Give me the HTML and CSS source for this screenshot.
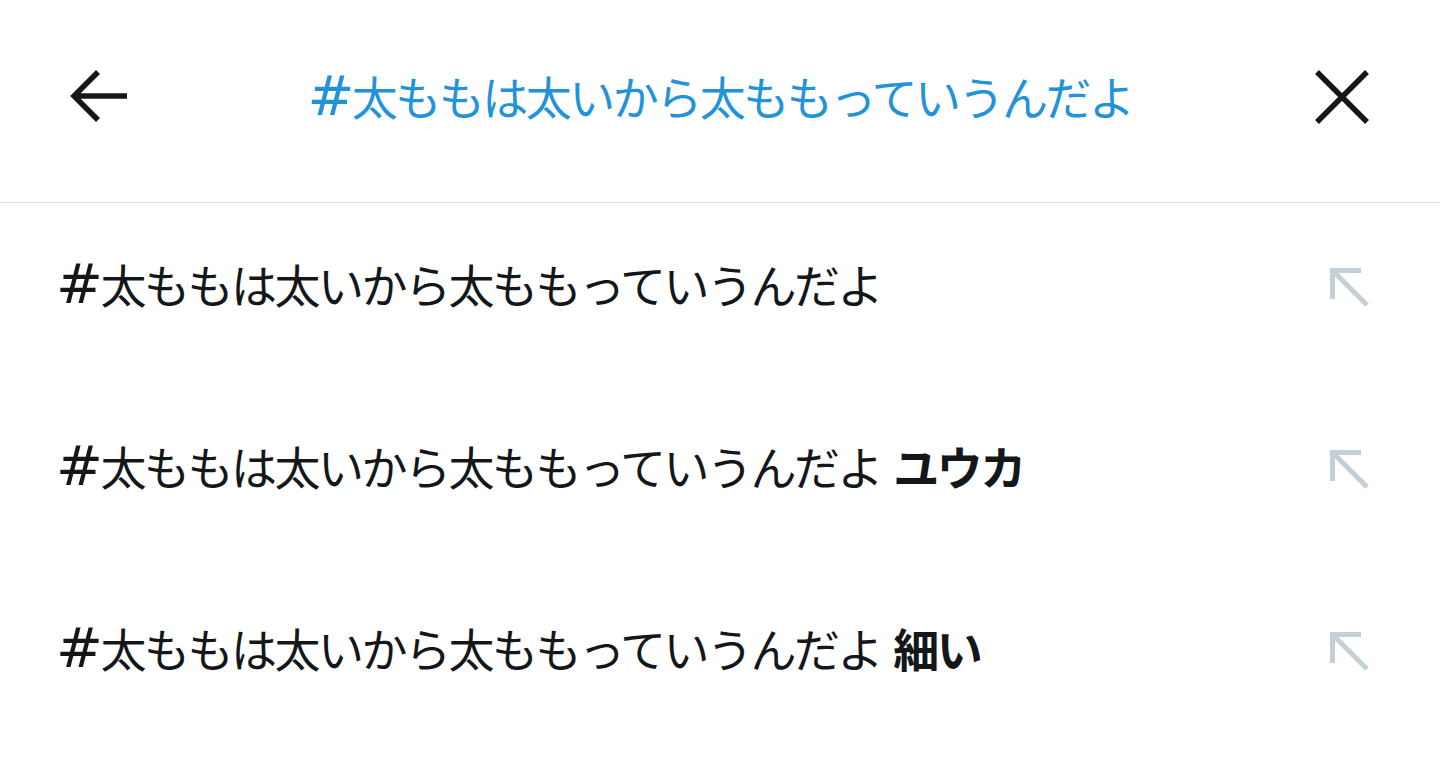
FILE: index.html
```html
<!DOCTYPE html>
<html lang="ja">
<head>
<meta charset="utf-8">
<link rel="stylesheet" href="styles.css">
</head>
<body>
<header class="bar">
  <div class="icon-btn">
    <svg width="60" height="60" viewBox="0 0 60 60"><path d="M59 29H6M30 5L6 29l24 24" fill="none" stroke="#14171a" stroke-width="5.5" stroke-linecap="butt" stroke-linejoin="miter"/></svg>
  </div>
  <div class="title"><span class="hash">#</span>太ももは太いから太ももっていうんだよ</div>
  <div class="icon-btn">
    <svg width="60" height="60" viewBox="0 0 60 60"><path d="M5 5L55 55M55 5L5 55" fill="none" stroke="#14171a" stroke-width="5.5"/></svg>
  </div>
</header>
<ul class="list">
  <li class="row"><span class="text"><span class="hash">#</span>太ももは太いから太ももっていうんだよ</span><svg width="40" height="40" viewBox="0 0 40 40"><path d="M2.5 31V2.5H31M2.5 2.5L37 37" fill="none" stroke="#c3d0d8" stroke-width="5"/></svg></li>
  <li class="row"><span class="text"><span class="hash">#</span>太ももは太いから太ももっていうんだよ <b>ユウカ</b></span><svg width="40" height="40" viewBox="0 0 40 40"><path d="M2.5 31V2.5H31M2.5 2.5L37 37" fill="none" stroke="#c3d0d8" stroke-width="5"/></svg></li>
  <li class="row"><span class="text"><span class="hash">#</span>太ももは太いから太ももっていうんだよ <b>細い</b></span><svg width="40" height="40" viewBox="0 0 40 40"><path d="M2.5 31V2.5H31M2.5 2.5L37 37" fill="none" stroke="#c3d0d8" stroke-width="5"/></svg></li>
</ul>
</body>
</html>
```
FILE: styles.css
```css
* { box-sizing: border-box; }
html, body { margin: 0; padding: 0; background: #fff; }
body {
  font-family: "DejaVu Sans", "Noto Sans CJK JP", sans-serif;
  color: #14171a;
  width: 1440px;
  height: 777px;
  overflow: hidden;
}
.bar {
  height: 203px;
  border-bottom: 1px solid #d9dfe2;
  display: flex;
  align-items: center;
  justify-content: space-between;
  padding: 0 68px 8px 68px;
}
.icon-btn { width: 60px; height: 60px; display: flex; }
.title {
  color: #2293d9;
  font-size: 46px;
  letter-spacing: -2.5px;
  line-height: 46px;
}
.hash { font-size: 56px; line-height: 46px; }
.list { list-style: none; margin: 0; padding: 0; }
.row {
  height: 182px;
  display: flex;
  align-items: center;
  justify-content: space-between;
  padding: 0 70px 12px 56px;
}
.text { font-size: 46px; letter-spacing: -2.5px; line-height: 46px; margin-bottom: 6px; }
.text b { font-weight: 700; }
```
